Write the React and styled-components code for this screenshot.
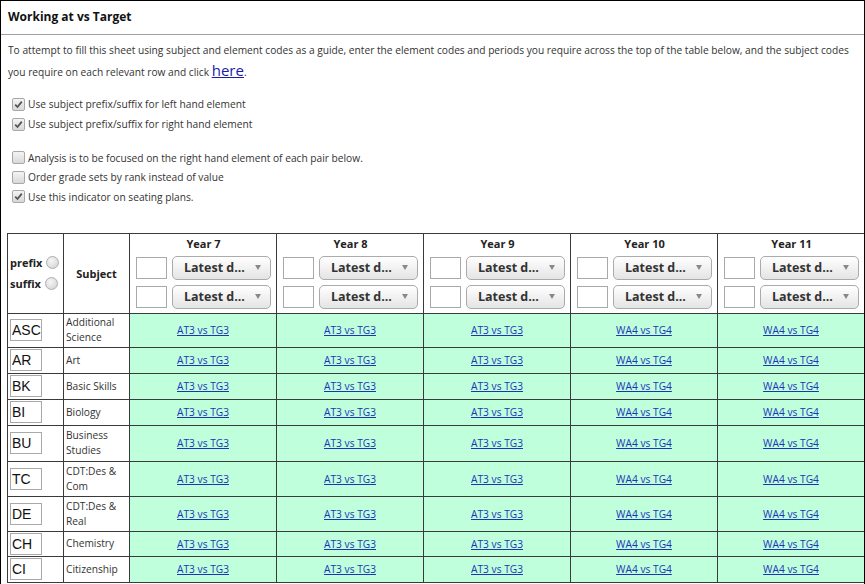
import React from 'react';
import styled, { createGlobalStyle } from 'styled-components';

const GlobalStyle = createGlobalStyle`
  body {
    margin: 0;
    background: #fff;
    font-family: "Open Sans", "Noto Sans", sans-serif;
    color: #222;
  }
`;

const Frame = styled.div`
  width: 863px;
  height: 584px;
  border: 1px solid #000;
  border-bottom: none;
  overflow: hidden;
  box-sizing: content-box;
`;

const Title = styled.h1`
  margin: 0;
  padding: 7px 7px 9px;
  font-size: 12px;
  font-weight: bold;
  line-height: 17px;
  color: #111;
  border-bottom: 1px solid #a0a0a0;
`;

const Intro = styled.p`
  margin: 0;
  padding: 5px 7px 0;
  font-size: 10.2px;
  line-height: 20px;
  color: #333;
  white-space: nowrap;
`;

const HereLink = styled.a`
  font-size: 15px;
  color: #1b1ba8;
  text-decoration: underline;
`;

const OptionGroup = styled.div`
  display: flex;
  flex-direction: column;
  padding-left: 11px;
  margin-top: ${(props) => props.top || 0}px;
`;

const Option = styled.label`
  display: flex;
  align-items: center;
  gap: 3px;
  height: ${(props) => props.h || 20}px;
  font-size: 10.2px;
  color: #333;
`;

const Box = styled.span`
  width: 11px;
  height: 11px;
  border: 1px solid #a8a8a8;
  border-radius: 2px;
  background: linear-gradient(#f4f4f4, #d8d8d8);
  display: inline-flex;
  align-items: center;
  justify-content: center;
  flex-shrink: 0;
`;

const Check = ({ on }) => (
  <Box>
    {on && (
      <svg width="9" height="9" viewBox="0 0 9 9">
        <path d="M1.2 4.6 L3.5 7 L7.8 1.6" fill="none" stroke="#555" strokeWidth="1.8" />
      </svg>
    )}
  </Box>
);

const Grid = styled.table`
  margin: 26px 0 0 6px;
  border-collapse: collapse;
  table-layout: fixed;
  width: 857px;

  td, th {
    border: 1px solid #3a3a3a;
    padding: 0;
  }
`;

const HeadCell = styled.th`
  font-size: 11px;
  font-weight: bold;
  color: #222;
  height: 79px;
  vertical-align: ${(props) => props.valign || 'middle'};
`;

const PrefixStack = styled.div`
  display: flex;
  flex-direction: column;
  gap: 6px;
  padding-left: 2px;
  text-align: left;
`;

const PrefixLine = styled.div`
  display: flex;
  align-items: center;
  gap: 4px;
`;

const Radio = styled.span`
  width: 11px;
  height: 11px;
  border-radius: 50%;
  border: 1px solid #b0b0b0;
  background: radial-gradient(circle at 40% 35%, #f6f6f6, #cfcfcf);
  display: inline-block;
`;

const YearHead = styled.div`
  display: flex;
  flex-direction: column;
  align-items: center;
  padding: 3px 5px 4px 6px;
  gap: 5px;
`;

const YearLabel = styled.div`
  line-height: 14px;
`;

const PickRow = styled.div`
  display: flex;
  align-items: center;
  gap: 5px;
  width: 100%;
`;

const SmallInput = styled.input`
  width: 31px;
  height: 22px;
  box-sizing: border-box;
  border: 1px solid #a9a9a9;
  padding: 0;
  margin: 0;
`;

const Picker = styled.div`
  flex: 1;
  height: 24px;
  box-sizing: border-box;
  border: 1px solid #ababab;
  border-radius: 5px;
  background: linear-gradient(#ffffff, #e4e4e4);
  display: flex;
  align-items: center;
  justify-content: space-between;
  padding: 0 9px 0 11px;
  font-size: 12.5px;
  font-weight: bold;
  color: #333;
`;

const Caret = styled.span`
  width: 0;
  height: 0;
  border-left: 3.5px solid transparent;
  border-right: 3.5px solid transparent;
  border-top: 5px solid #888;
`;

const CodeCell = styled.td`
  padding: 0 0 0 2px !important;
  height: ${(props) => props.h}px;
`;

const CodeBox = styled.input`
  width: 32px;
  height: 22px;
  box-sizing: border-box;
  border: 1px solid #a9a9a9;
  margin: 0;
  padding: 0 0 0 1px;
  font-family: "Liberation Sans", Arial, sans-serif;
  font-size: 14px;
  color: #111;
  display: block;
`;

const SubjectCell = styled.td`
  padding: 0 2px 0 2px !important;
  font-size: 10.2px;
  line-height: 15px;
  color: #333;
`;

const ResultCell = styled.td`
  background: #bfffdc;
  text-align: center;
  font-size: 10.2px;
`;

const ResultLink = styled.a`
  color: #1c34b8;
  text-decoration: underline;
`;

const years = [
  { label: 'Year 7', result: 'AT3 vs TG3' },
  { label: 'Year 8', result: 'AT3 vs TG3' },
  { label: 'Year 9', result: 'AT3 vs TG3' },
  { label: 'Year 10', result: 'WA4 vs TG4' },
  { label: 'Year 11', result: 'WA4 vs TG4' },
];

const subjects = [
  { code: 'ASC', name: 'Additional Science', h: 33 },
  { code: 'AR', name: 'Art', h: 25 },
  { code: 'BK', name: 'Basic Skills', h: 25 },
  { code: 'BI', name: 'Biology', h: 25 },
  { code: 'BU', name: 'Business Studies', h: 35 },
  { code: 'TC', name: 'CDT:Des & Com', h: 34 },
  { code: 'DE', name: 'CDT:Des & Real', h: 34 },
  { code: 'CH', name: 'Chemistry', h: 24 },
  { code: 'CI', name: 'Citizenship', h: 25 },
];

const App = () => (
  <Frame>
    <GlobalStyle />
    <Title>Working at vs Target</Title>
    <Intro>
      To attempt to fill this sheet using subject and element codes as a guide, enter the element codes and periods you require across the top of the table below, and the subject codes
      <br />
      you require on each relevant row and click <HereLink href="#">here</HereLink>.
    </Intro>

    <OptionGroup top={12}>
      <Option><Check on />Use subject prefix/suffix for left hand element</Option>
      <Option><Check on />Use subject prefix/suffix for right hand element</Option>
    </OptionGroup>

    <OptionGroup top={14}>
      <Option h={19.5}><Check />Analysis is to be focused on the right hand element of each pair below.</Option>
      <Option h={19.5}><Check />Order grade sets by rank instead of value</Option>
      <Option h={19.5}><Check on />Use this indicator on seating plans.</Option>
    </OptionGroup>

    <Grid>
      <colgroup>
        <col style={{ width: 56 }} />
        <col style={{ width: 66 }} />
        {years.map((y) => <col key={y.label} style={{ width: 147 }} />)}
      </colgroup>
      <thead>
        <tr>
          <HeadCell>
            <PrefixStack>
              <PrefixLine>prefix <Radio /></PrefixLine>
              <PrefixLine>suffix <Radio /></PrefixLine>
            </PrefixStack>
          </HeadCell>
          <HeadCell>Subject</HeadCell>
          {years.map((y) => (
            <HeadCell key={y.label} valign="top">
              <YearHead>
                <YearLabel>{y.label}</YearLabel>
                {[0, 1].map((i) => (
                  <PickRow key={i}>
                    <SmallInput />
                    <Picker>Latest d...<Caret /></Picker>
                  </PickRow>
                ))}
              </YearHead>
            </HeadCell>
          ))}
        </tr>
      </thead>
      <tbody>
        {subjects.map((s) => (
          <tr key={s.code}>
            <CodeCell h={s.h}>
              <CodeBox defaultValue={s.code} />
            </CodeCell>
            <SubjectCell>{s.name}</SubjectCell>
            {years.map((y) => (
              <ResultCell key={y.label}>
                <ResultLink href="#">{y.result}</ResultLink>
              </ResultCell>
            ))}
          </tr>
        ))}
      </tbody>
    </Grid>
  </Frame>
);

export default App;
